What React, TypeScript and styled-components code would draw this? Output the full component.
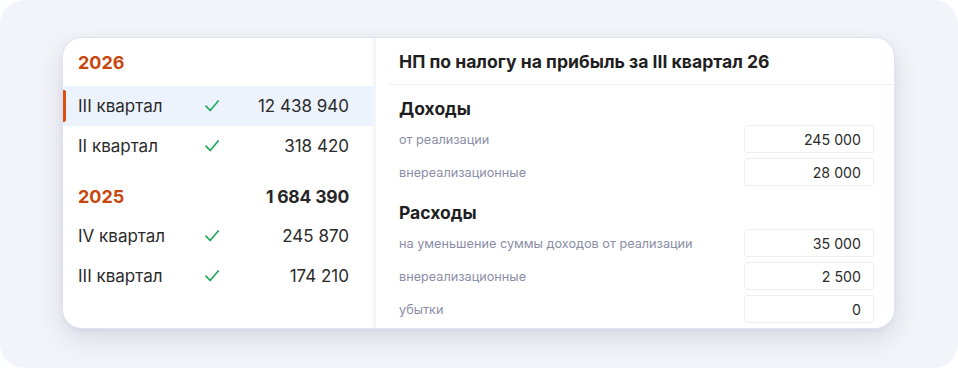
import styled, { createGlobalStyle } from "styled-components";

const GlobalStyle = createGlobalStyle`
    html, body{
        margin:0;
        padding:0;
        background:#fff;
    }
    *{
        box-sizing:border-box;
    }
    body{
        font-family:Inter, "Noto Sans", "Liberation Sans", sans-serif;
        color:#262626;
    }
`;

const Page = styled.div`
    width:958px;
    height:368px;
    background:#f3f4f9;
    border-radius:24px;
    padding:37px 63px 0 62px;
`;

const Card = styled.div`
    display:flex;
    height:292px;
    background:#fff;
    border:1px solid #dfe2f4;
    border-radius:20px;
    overflow:hidden;
    box-shadow:0 10px 26px rgba(40, 46, 90, 0.13), 0 2px 5px rgba(40, 46, 90, 0.05);
`;

const Periods = styled.div`
    width:310px;
    flex-shrink:0;
    display:flex;
    flex-direction:column;
`;

const YearHead = styled.div<{ $gap: number; $height: number }>`
    display:flex;
    align-items:center;
    justify-content:space-between;
    height:${p => p.$height}px;
    margin-top:${p => p.$gap}px;
    padding:1px 24px 0 15px;
    font-size:18px;
    font-weight:700;

    .year{
        color:#c8470e;
    }
    .total{
        color:#262626;
        font-size:17.5px;
        letter-spacing:-.2px;
    }
`;

const Quarter = styled.div<{ $active?: boolean }>`
    position:relative;
    display:grid;
    grid-template-columns:120px 28px 1fr;
    align-items:center;
    height:40px;
    padding:0 24px 0 15px;
    font-size:17px;
    color:#2b2b2b;
    background:${p => (p.$active ? "#edf3fc" : "transparent")};

    &::before{
        content:"";
        display:${p => (p.$active ? "block" : "none")};
        position:absolute;
        left:0;
        top:4px;
        bottom:4px;
        width:3px;
        border-radius:0 2px 2px 0;
        background:#d9500f;
    }

    .check{
        display:flex;
        justify-content:center;
    }
    .sum{
        text-align:right;
    }
`;

const Details = styled.div`
    flex:1;
    display:flex;
    flex-direction:column;
    border-left:3px solid #f4f5f8;
    padding-right:20px;
`;

const Title = styled.div`
    height:47px;
    margin-left:13px;
    margin-right:-20px;
    padding-left:10px;
    display:flex;
    align-items:center;
    border-bottom:1px solid #eef0f3;
    font-size:17.6px;
    font-weight:700;
    color:#1f1f1f;
`;

const Section = styled.div`
    display:flex;
    flex-direction:column;
    gap:5px;
    padding-left:23px;
`;

const SectionTitle = styled.div<{ $top: number }>`
    padding-top:${p => p.$top}px;
    margin-bottom:-1px;
    line-height:24px;
    font-size:17.5px;
    font-weight:700;
    color:#1f1f1f;
`;

const Field = styled.div`
    display:flex;
    align-items:center;
    justify-content:space-between;
    height:28px;
    font-size:12.7px;
    color:#8b8ea6;
`;

const Value = styled.div`
    width:130px;
    height:100%;
    display:flex;
    align-items:center;
    justify-content:flex-end;
    padding-right:12px;
    border:1px solid #eceef2;
    border-radius:3px;
    font-size:14.2px;
    color:#2b2b2b;
`;

const Check = () => (
    <svg width="16" height="14" viewBox="0 0 16 14" fill="none">
        <path d="M2 7.2l4.2 4.3L14.2 2" stroke="#1fa85a" strokeWidth="1.7" strokeLinecap="round" strokeLinejoin="round" />
    </svg>
);

type Row = { name: string; sum: string; active?: boolean };

const groups: { year: string; total?: string; rows: Row[] }[] = [
    {
        year: "2026",
        rows: [
            { name: "III квартал", sum: "12 438 940", active: true },
            { name: "II квартал", sum: "318 420" },
        ],
    },
    {
        year: "2025",
        total: "1 684 390",
        rows: [
            { name: "IV квартал", sum: "245 870" },
            { name: "III квартал", sum: "174 210" },
        ],
    },
];

const income = [
    { label: "от реализации", value: "245 000" },
    { label: "внереализационные", value: "28 000" },
];

const expenses = [
    { label: "на уменьшение суммы доходов от реализации", value: "35 000" },
    { label: "внереализационные", value: "2 500" },
    { label: "убытки", value: "0" },
];

export default function App() {
    return (
        <>
            <GlobalStyle />
            <Page>
                <Card>
                    <Periods>
                        {groups.map((g, i) => (
                            <div key={g.year}>
                                <YearHead $gap={i === 0 ? 0 : 10} $height={i === 0 ? 48 : 40}>
                                    <span className="year">{g.year}</span>
                                    {g.total && <span className="total">{g.total}</span>}
                                </YearHead>
                                {g.rows.map(r => (
                                    <Quarter key={r.name} $active={r.active}>
                                        <span>{r.name}</span>
                                        <span className="check"><Check /></span>
                                        <span className="sum">{r.sum}</span>
                                    </Quarter>
                                ))}
                            </div>
                        ))}
                    </Periods>
                    <Details>
                        <Title>НП по налогу на прибыль за III квартал 26</Title>
                        <Section>
                            <SectionTitle $top={12}>Доходы</SectionTitle>
                            {income.map(f => (
                                <Field key={f.label}>
                                    <span>{f.label}</span>
                                    <Value>{f.value}</Value>
                                </Field>
                            ))}
                        </Section>
                        <Section>
                            <SectionTitle $top={15}>Расходы</SectionTitle>
                            {expenses.map(f => (
                                <Field key={f.label}>
                                    <span>{f.label}</span>
                                    <Value>{f.value}</Value>
                                </Field>
                            ))}
                        </Section>
                    </Details>
                </Card>
            </Page>
        </>
    );
}
